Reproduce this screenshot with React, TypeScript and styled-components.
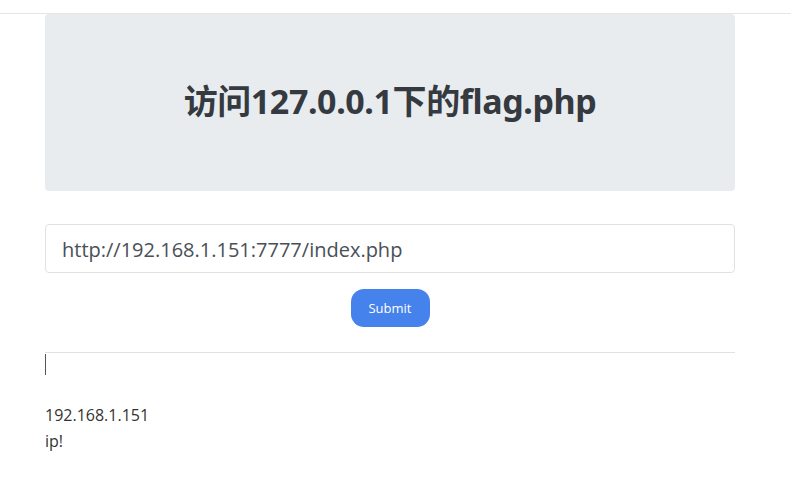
import React from 'react'
import styled, { createGlobalStyle } from 'styled-components'

const GlobalStyle = createGlobalStyle`
  body {
    margin: 0;
    background: #fff;
    font-family: "Open Sans", "Noto Sans", "Noto Sans CJK SC", sans-serif;
    color: #212529;
  }
`

const TopBar = styled.div`
  height: 13px;
  border-bottom: 1px solid #e5e5e5;
`

const Container = styled.div`
  width: 690px;
  margin-left: 45px;
`

const Jumbotron = styled.div`
  height: 177px;
  box-sizing: border-box;
  padding-bottom: 6px;
  background: #e9ecef;
  border-radius: 4px;
  display: flex;
  align-items: center;
  justify-content: center;
`

const Title = styled.h1`
  margin: 0;
  font-size: 34px;
  font-weight: 700;
  color: #343a40;
  font-family: "Noto Sans", "Noto Sans CJK SC", sans-serif;
  letter-spacing: -0.4px;
`

const Form = styled.form`
  margin-top: 33px;
  display: flex;
  flex-direction: column;
  align-items: center;
  gap: 16px;
`

const UrlInput = styled.input`
  box-sizing: border-box;
  width: 100%;
  height: 49px;
  padding: 2px 16px 0;
  border: 1px solid #dee2e6;
  border-radius: 4px;
  font-family: "Open Sans", "Noto Sans", sans-serif;
  font-size: 20px;
  color: #495057;
  outline: none;
`

const SubmitButton = styled.button`
  width: 79px;
  height: 38px;
  border: none;
  border-radius: 13px;
  background: #4582ec;
  color: #fff;
  font-family: "Open Sans", "Noto Sans", sans-serif;
  font-size: 13px;
`

const Divider = styled.hr`
  margin: 25px 0 0;
  border: none;
  border-top: 1px solid #e2e2e2;
`

const Caret = styled.div`
  width: 1px;
  height: 21px;
  margin-top: 1px;
  background: #555;
`

const Output = styled.div`
  margin-top: 27px;
  font-size: 16px;
  line-height: 26px;
  color: #333;
`

export default function App() {
  return (
    <>
      <GlobalStyle />
      <TopBar />
      <Container>
        <Jumbotron>
          <Title>访问127.0.0.1下的flag.php</Title>
        </Jumbotron>
        <Form onSubmit={(e) => e.preventDefault()}>
          <UrlInput defaultValue="http://192.168.1.151:7777/index.php" />
          <SubmitButton type="submit">Submit</SubmitButton>
        </Form>
        <Divider />
        <Caret />
        <Output>
          192.168.1.151
          <br />
          ip!
        </Output>
      </Container>
    </>
  )
}
